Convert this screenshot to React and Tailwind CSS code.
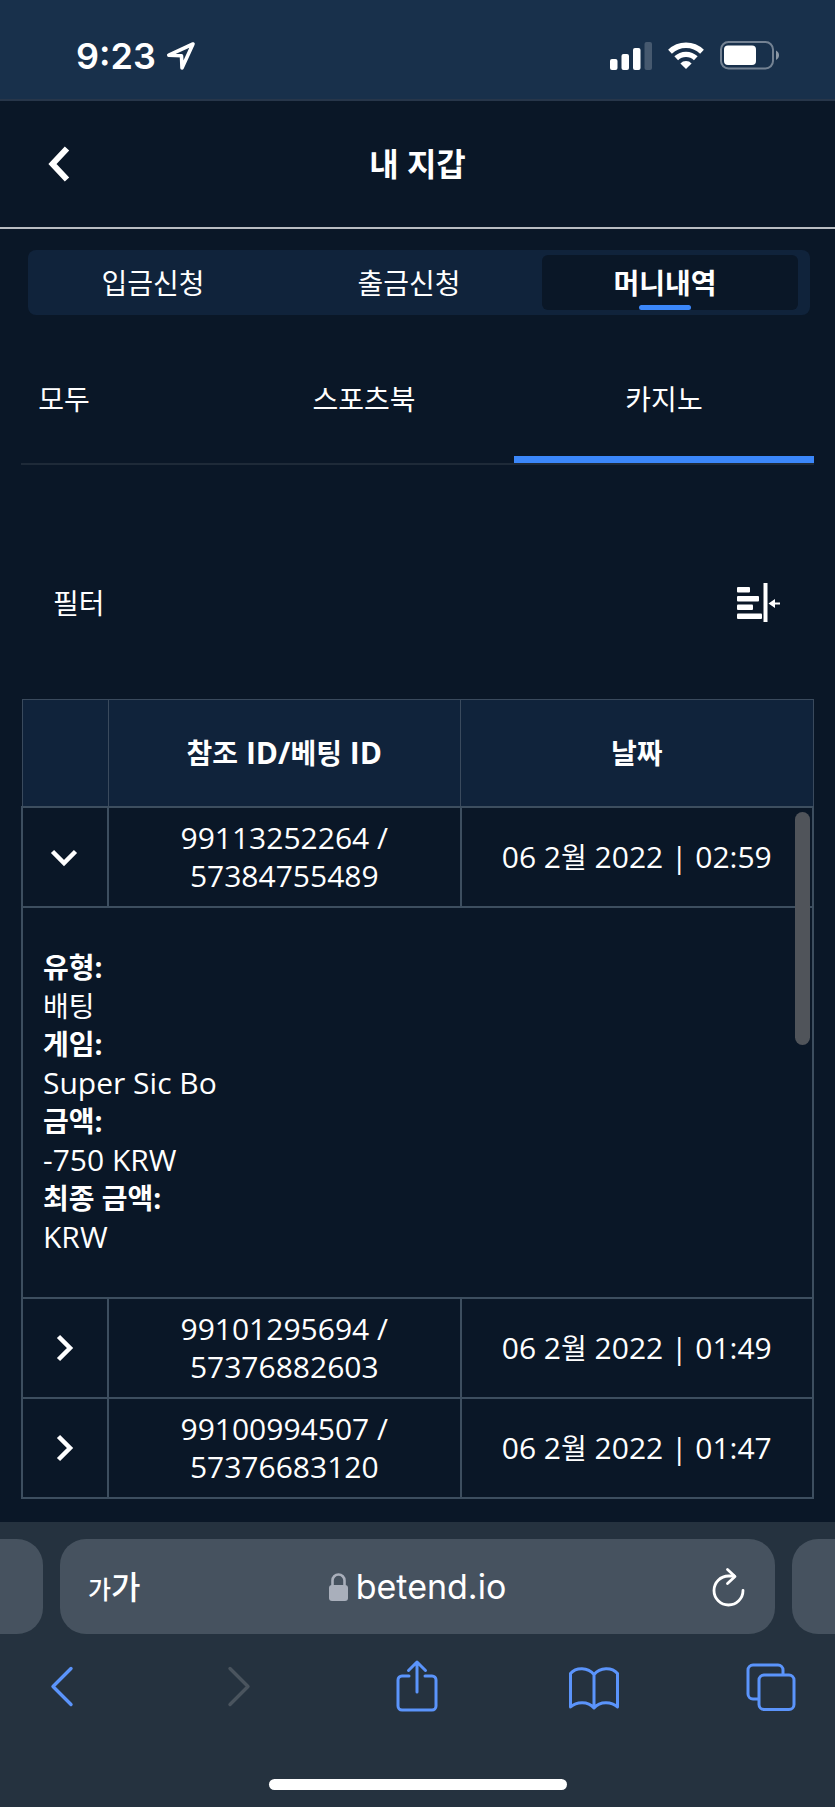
const TABS = ["입금신청", "출금신청", "머니내역"];
const CATEGORIES = ["모두", "스포츠북", "카지노"];

const transactions = [
  {
    refId: "99113252264",
    betId: "57384755489",
    day: "06 2",
    rest: " 2022 | 02:59",
    details: [
      { label: "유형:", value: "배팅", korean: true },
      { label: "게임:", value: "Super Sic Bo" },
      { label: "금액:", value: "-750 KRW" },
      { label: "최종 금액:", value: "KRW" },
    ],
  },
  { refId: "99101295694", betId: "57376882603", day: "06 2", rest: " 2022 | 01:49" },
  { refId: "99100994507", betId: "57376683120", day: "06 2", rest: " 2022 | 01:47" },
];

function StatusBar() {
  return (
    <div className="flex h-[101px] items-center justify-between border-b-2 border-[#27364a] bg-[#18304b] pl-19 pr-14 pt-3 font-['Inter',sans-serif]">
      <div className="flex items-center gap-2.5">
        <span className="text-[36px] leading-10 font-semibold">9:23</span>
        <svg width="30" height="30" viewBox="0 0 30 30" fill="none" stroke="currentColor" strokeWidth="3.6" strokeLinejoin="round">
          <path d="M27 3 2.8 14.2 15.5 14.8 16 27Z" />
        </svg>
      </div>
      <div className="flex items-center gap-4">
        <svg width="42" height="28" viewBox="0 0 42 28" fill="currentColor">
          <rect x="0" y="17" width="7.5" height="11" rx="2" />
          <rect x="11.5" y="12" width="7.5" height="16" rx="2" />
          <rect x="23" y="6" width="7.5" height="22" rx="2" />
          <rect x="34.5" y="0" width="7.5" height="28" rx="2" opacity="0.2" />
        </svg>
        <svg width="36" height="28" viewBox="0 0 36 28" fill="none" stroke="currentColor" strokeWidth="5.4">
          <path d="M2 9.7a23 23 0 0 1 32 0" />
          <path d="M8.2 16.3a14.2 14.2 0 0 1 19.6 0" />
          <path d="M18 27l-5.6-5.6a8 8 0 0 1 11.2 0z" fill="currentColor" stroke="none" />
        </svg>
        <svg width="59" height="29" viewBox="0 0 59 29" fill="currentColor">
          <rect x="1" y="1" width="52" height="26.5" rx="7.5" fill="none" stroke="currentColor" strokeWidth="2" opacity="0.4" />
          <rect x="4" y="4.5" width="32" height="19.5" rx="4" />
          <path d="M56 9.5c4 2 4 7.5 0 9.5z" opacity="0.5" />
        </svg>
      </div>
    </div>
  );
}

function Chevron({ open }) {
  return (
    <svg className="mx-auto" width="28" height="28" viewBox="0 0 28 28" fill="none" stroke="currentColor" strokeWidth="4.5">
      <path d={open ? "M2.5 8.5 14 20 25.5 8.5" : "M8.5 2.5 20 14 8.5 25.5"} />
    </svg>
  );
}

function TransactionRow({ item }) {
  const open = Boolean(item.details);
  return (
    <>
      <tr className="h-25">
        <td className="border-2 border-[#3d4e5f] p-0">
          <button type="button" aria-label="상세" aria-expanded={open} className="block w-full pr-0.5">
            <Chevron open={open} />
          </button>
        </td>
        <td className="border-2 border-[#3d4e5f] p-0 leading-[38px]">
          {item.refId} /<br />
          {item.betId}
        </td>
        <td className="border-2 border-[#3d4e5f] p-0">
          {item.day}
          <span className="text-[28px]">월</span>
          {item.rest}
        </td>
      </tr>
      {open && (
        <tr>
          <td colSpan={3} className="border-2 border-[#3d4e5f] px-5 pt-10 pb-[41px] text-left">
            <dl>
              {item.details.map((d) => (
                <div key={d.label}>
                  <dt className="text-[28px] leading-[39px] font-bold">{d.label}</dt>
                  <dd className={d.korean ? "text-[28px] leading-[38px]" : "leading-[38px]"}>{d.value}</dd>
                </div>
              ))}
            </dl>
          </td>
        </tr>
      )}
    </>
  );
}

function BrowserBar() {
  return (
    <footer className="bg-[#25323f] py-[17px]">
      <div className="flex h-[95px] gap-[17px]">
        <div className="w-[43px] rounded-r-[26px] bg-[#46525f]" />
        <div className="grid flex-1 grid-cols-[1fr_auto_1fr] items-center rounded-[26px] bg-[#46525f] px-7">
          <button type="button" aria-label="글자 크기" className="flex items-baseline font-medium">
            <span className="text-[25px]">가</span>
            <span className="text-[32px]">가</span>
          </button>
          <a href="https://betend.io" className="flex items-center gap-2 font-['Inter',sans-serif] text-[34px]">
            <svg width="19" height="28" viewBox="0 0 19 28" fill="#a9afbb">
              <rect x="0" y="12" width="19" height="16" rx="3" />
              <path d="M3.5 13V7.5a6 6 0 0 1 12 0V13" fill="none" stroke="#a9afbb" strokeWidth="2.6" />
            </svg>
            betend.io
          </a>
          <button type="button" aria-label="새로고침" className="justify-self-end">
            <svg width="38" height="40" viewBox="0 0 38 40" fill="none" stroke="currentColor" strokeWidth="2.8" strokeLinecap="round" strokeLinejoin="round">
              <path d="M34 23.5A14.5 14.5 0 1 1 19.5 9h5.5" />
              <path d="M18.5 2.5 26 9.5l-7.5 7" />
            </svg>
          </button>
        </div>
        <div className="w-[43px] rounded-l-[26px] bg-[#46525f]" />
      </div>

      <div className="mt-[25px] flex items-center justify-between pl-9 pr-[38px] text-[#5b94fb]">
        <button type="button" aria-label="뒤로" className="flex w-13 justify-center">
          <svg width="28" height="54" viewBox="0 0 28 54" fill="none" stroke="currentColor" strokeWidth="3.4" strokeLinecap="round" strokeLinejoin="round">
            <path d="M23 9.5 5 27.5l18 18" />
          </svg>
        </button>
        <button type="button" aria-label="앞으로" disabled className="flex w-13 justify-center text-[#4a545e]">
          <svg width="28" height="54" viewBox="0 0 28 54" fill="none" stroke="currentColor" strokeWidth="3.4" strokeLinecap="round" strokeLinejoin="round">
            <path d="M5 9.5l18 18-18 18" />
          </svg>
        </button>
        <button type="button" aria-label="공유" className="flex w-13 justify-center">
          <svg width="42" height="54" viewBox="0 0 42 54" fill="none" stroke="currentColor" strokeWidth="3" strokeLinecap="round" strokeLinejoin="round">
            <path d="M13 17H6a4 4 0 0 0-4 4v26a4 4 0 0 0 4 4h30a4 4 0 0 0 4-4V21a4 4 0 0 0-4-4h-7M21 33V3M12.5 11.5 21 3l8.5 8.5" />
          </svg>
        </button>
        <button type="button" aria-label="책갈피" className="flex w-13 justify-center">
          <svg width="52" height="54" viewBox="0 0 52 54" fill="none" stroke="currentColor" strokeWidth="3" strokeLinejoin="round">
            <path d="M26 15.5C20 8 8 8 2.5 14.5V48C8 42.5 20 41.5 26 49c6-7.5 18-6.5 23.5-1V14.5C44 8 32 8 26 15.5zV49" />
          </svg>
        </button>
        <button type="button" aria-label="탭" className="flex w-13 justify-center">
          <svg width="50" height="54" viewBox="0 0 50 54" fill="none" stroke="currentColor" strokeWidth="3">
            <rect x="13" y="16" width="35" height="34.5" rx="5" />
            <path d="M37 16v-5a5 5 0 0 0-5-5H7a5 5 0 0 0-5 5v24a5 5 0 0 0 5 5h6" />
          </svg>
        </button>
      </div>
      <div className="mx-auto mt-[66px] h-[11px] w-[298px] rounded-full bg-white" />
    </footer>
  );
}

export default function App() {
  return (
    <div className="flex min-h-screen flex-col bg-[#0a1727] font-['Open_Sans','Noto_Sans_CJK_KR',sans-serif] text-white">
      <StatusBar />

      <header className="grid h-32 grid-cols-[1fr_auto_1fr] items-center border-b-2 border-[#b9bdc2] px-12">
        <button type="button" aria-label="뒤로" className="justify-self-start">
          <svg width="22" height="36" viewBox="0 0 22 36" fill="none" stroke="currentColor" strokeWidth="6">
            <path d="M19 2.5 4.5 18 19 33.5" />
          </svg>
        </button>
        <h1 className="text-[32px] font-bold">내 지갑</h1>
      </header>

      <main className="flex-1 px-[21px] pb-[22px]">
        <nav className="mt-[21px] mr-1 ml-[7px] flex h-[65px] rounded-lg bg-[#10233b] py-[5px] pl-0.5 pr-3 text-[28px]">
          {TABS.map((tab, i) => (
            <button
              key={tab}
              type="button"
              className={
                i === 2
                  ? "relative flex-1 rounded-md bg-[#0a1727] pr-2.5 font-bold"
                  : "flex-1 pr-2.5"
              }
            >
              {tab}
              {i === 2 && (
                <span className="absolute inset-x-0 bottom-0 flex justify-center pr-2.5">
                  <span className="h-[5px] w-[52px] rounded-full bg-[#3b87fa]" />
                </span>
              )}
            </button>
          ))}
        </nav>

        {/* scrolled to the last category, so the first one is cut off */}
        <nav className="mt-5 flex justify-end overflow-hidden border-b-2 border-[#1e2a38] text-[28px]">
          {CATEGORIES.map((name, i) => (
            <button
              key={name}
              type="button"
              className={
                i === 2
                  ? "h-32 w-[300px] shrink-0 border-b-[7px] border-[#3b87fa] pt-[7px]"
                  : "h-32 w-[300px] shrink-0"
              }
            >
              {name}
            </button>
          ))}
        </nav>

        <div className="mt-[118px] flex h-10 items-center justify-between pl-8 pr-[34px]">
          <span className="text-[28px]">필터</span>
          <button type="button" aria-label="필터 열기">
            <svg width="43" height="40" viewBox="0 0 43 40" fill="currentColor">
              <rect x="0" y="4" width="13" height="5.5" rx="1" />
              <rect x="0" y="13" width="22" height="5.5" rx="1" />
              <rect x="0" y="21.5" width="16" height="5.5" rx="1" />
              <rect x="0" y="30.5" width="25" height="5.5" rx="1" />
              <rect x="26.5" y="0" width="4" height="39" />
              <path d="M31.5 20.5 38 16v3.5h5v2h-5V25z" />
            </svg>
          </button>
        </div>

        <div className="relative mt-[76px]">
          <table className="w-full table-fixed border-collapse text-center text-[30px]">
            <colgroup>
              <col className="w-[86px]" />
              <col />
              <col />
            </colgroup>
            <thead>
              <tr className="h-[107px] bg-[#10233b]">
                <th className="border border-[#3a4a5d]" aria-label="상세" />
                <th className="border border-[#3a4a5d] p-0">
                  <span className="text-[28px]">참조</span> ID/<span className="text-[28px]">베팅</span> ID
                </th>
                <th className="border border-[#3a4a5d] p-0 text-[28px]">날짜</th>
              </tr>
            </thead>
            <tbody>
              {transactions.map((item) => (
                <TransactionRow key={item.refId} item={item} />
              ))}
            </tbody>
          </table>
          <div className="absolute top-[113px] right-1 h-[233px] w-[15px] rounded-full bg-[#50545a]" />
        </div>
      </main>

      <BrowserBar />
    </div>
  );
}
